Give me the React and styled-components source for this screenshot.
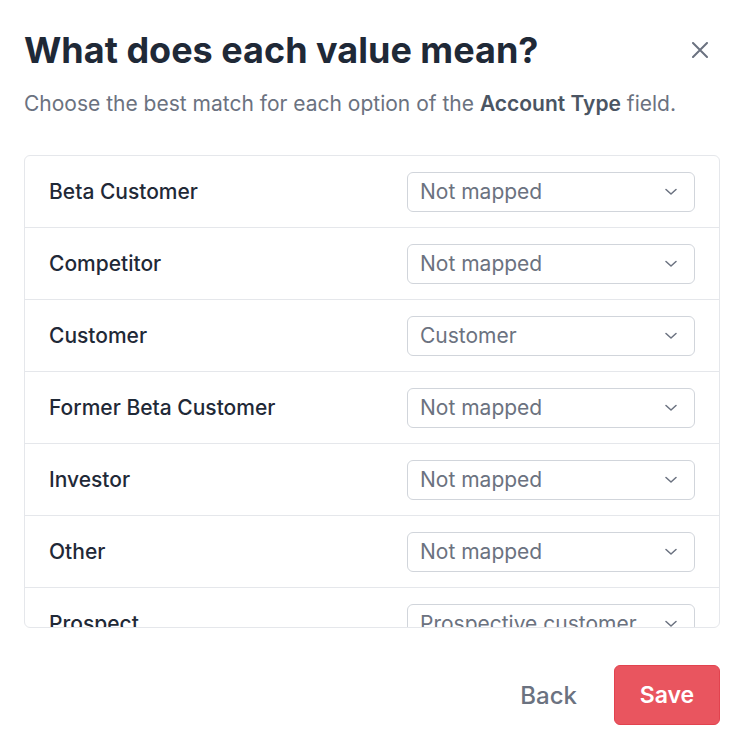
import React, { useState } from 'react';
import styled, { createGlobalStyle } from 'styled-components';

const GlobalStyle = createGlobalStyle`
  html, body {
    margin: 0;
    padding: 0;
    background: #ffffff;
  }
  body {
    font-family: Inter, "Noto Sans", sans-serif;
    -webkit-font-smoothing: antialiased;
  }
`;

const Modal = styled.div`
  width: 744px;
  height: 750px;
  box-sizing: border-box;
  padding: 29px 24px 0 24px;
  display: flex;
  flex-direction: column;
`;

const Header = styled.div`
  display: flex;
  align-items: flex-start;
  justify-content: space-between;
`;

const Title = styled.h1`
  margin: 0;
  font-size: 36px;
  line-height: 42px;
  font-weight: 700;
  color: #1f2937;
`;

const CloseButton = styled.button`
  border: none;
  background: none;
  padding: 0;
  margin: 13px 12px 0 0;
  width: 16px;
  height: 16px;
  display: flex;
  align-items: center;
  justify-content: center;
  cursor: pointer;
  color: #6b7280;
`;

const Subtitle = styled.p`
  margin: 19px 0 0 0;
  font-size: 21px;
  line-height: 28px;
  color: #6b7280;

  strong {
    font-weight: 600;
    color: #4b5563;
  }
`;

const Table = styled.div`
  margin-top: 37px;
  height: 473px;
  box-sizing: border-box;
  border: 1px solid #e5e7eb;
  border-radius: 6px;
  overflow: hidden;
`;

const Row = styled.div`
  height: 72px;
  box-sizing: border-box;
  display: flex;
  align-items: center;
  justify-content: space-between;
  padding: 0 24px;
  border-bottom: 1px solid #e5e7eb;
`;

const Label = styled.span`
  font-size: 21px;
  font-weight: 500;
  color: #1f2937;
`;

const SelectBox = styled.div`
  position: relative;
  width: 288px;
  height: 40px;
  box-sizing: border-box;
  border: 1px solid #d1d5db;
  border-radius: 6px;
  display: flex;
  align-items: center;
  padding: 0 12px;
  font-size: 21px;
  color: #6b7280;
  background: #fff;
`;

const Chevron = styled.svg`
  position: absolute;
  right: 17px;
  top: 50%;
  margin-top: -4px;
`;

const Footer = styled.div`
  margin-top: 37px;
  display: flex;
  justify-content: flex-end;
  align-items: center;
  gap: 37px;
`;

const BackButton = styled.button`
  border: none;
  background: none;
  padding: 0;
  font-family: inherit;
  font-size: 24px;
  font-weight: 500;
  color: #6b7280;
  cursor: pointer;
`;

const SaveButton = styled.button`
  width: 106px;
  height: 60px;
  border: 1px solid #e2434f;
  border-radius: 6px;
  background: #e9555f;
  color: #fff;
  font-family: inherit;
  font-size: 23px;
  font-weight: 600;
  cursor: pointer;
`;

const mappings = [
  ['Beta Customer', 'Not mapped'],
  ['Competitor', 'Not mapped'],
  ['Customer', 'Customer'],
  ['Former Beta Customer', 'Not mapped'],
  ['Investor', 'Not mapped'],
  ['Other', 'Not mapped'],
  ['Prospect', 'Prospective customer'],
];

const Select = ({ value }) => (
  <SelectBox>
    {value}
    <Chevron width="12" height="8" viewBox="0 0 12 8" fill="none">
      <path d="M1 1.5l5 4.5 5-4.5" stroke="#6b7280" strokeWidth="1.5" strokeLinecap="round" strokeLinejoin="round" />
    </Chevron>
  </SelectBox>
);

const App = () => {
  const [rows] = useState(mappings);
  return (
    <>
      <GlobalStyle />
      <Modal>
        <Header>
          <Title>What does each value mean?</Title>
          <CloseButton aria-label="Close">
            <svg width="16" height="16" viewBox="0 0 16 16" fill="none">
              <path d="M1 1l14 14M15 1L1 15" stroke="currentColor" strokeWidth="2" strokeLinecap="round" />
            </svg>
          </CloseButton>
        </Header>
        <Subtitle>
          Choose the best match for each option of the <strong>Account Type</strong> field.
        </Subtitle>
        <Table>
          {rows.map(([label, value]) => (
            <Row key={label}>
              <Label>{label}</Label>
              <Select value={value} />
            </Row>
          ))}
        </Table>
        <Footer>
          <BackButton>Back</BackButton>
          <SaveButton>Save</SaveButton>
        </Footer>
      </Modal>
    </>
  );
};

export default App;
